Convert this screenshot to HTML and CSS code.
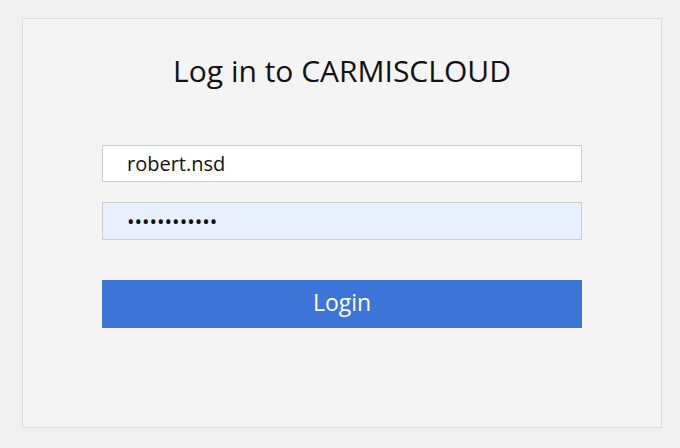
FILE: index.html
```html
<!DOCTYPE html>
<html>
<head>
	<title>Log in to CARMISCLOUD</title>
	<meta charset="utf-8">
	<link rel="stylesheet" href="styles.css">
</head>
<body>
	<div class="login_box">
		<h1 class="login_title">Log in to CARMISCLOUD</h1>
		<form class="login_form">
			<input class="login_input" type="text" value="robert.nsd">
			<input class="login_input login_password" type="password" value="robertnsd123">
			<button class="login_button" type="button">Login</button>
		</form>
	</div>
</body>
</html>
```

FILE: styles.css
```css
* {
	margin: 0px;
	box-sizing: border-box;
}
body {
	background-color: #f0f0f0;
	font-family: "Open Sans", sans-serif;
	padding: 18px 18px 20px 22px;
}
.login_box {
	width: 640px;
	height: 410px;
	background-color: #f4f4f4;
	border: 1px solid #dcdcdc;
	padding-top: 32px;
}
.login_title {
	font-size: 30px;
	font-weight: normal;
	text-align: center;
	color: #111;
	line-height: 40px;
}
.login_form {
	width: 480px;
	margin: 54px auto 0px auto;
	display: flex;
	flex-direction: column;
}
.login_input {
	height: 37px;
	border: 1px solid #cccccc;
	background-color: white;
	font-family: "Open Sans", sans-serif;
	font-size: 20px;
	color: #111;
	padding: 0px 24px;
	margin-bottom: 20px;
	outline: none;
}
.login_password {
	height: 38px;
	background-color: #e8f0fe;
	margin-bottom: 40px;
	font-size: 20px;
}
.login_button {
	height: 48px;
	border: 0px;
	background-color: #3d74d8;
	color: white;
	font-family: "Open Sans", sans-serif;
	font-size: 23px;
	padding: 0px 0px 4px 0px;
	cursor: pointer;
}
```
